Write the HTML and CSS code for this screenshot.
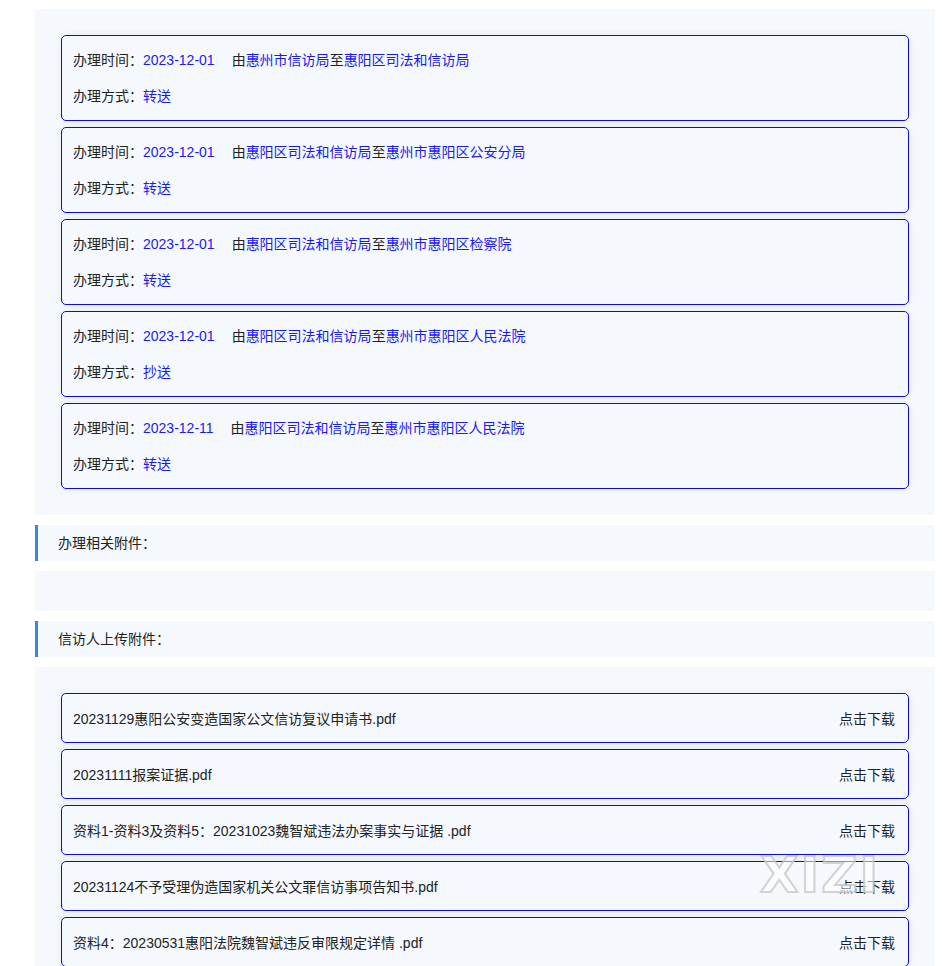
FILE: index.html
```html
<!DOCTYPE html>
<html lang="zh-CN">
<head>
    <meta charset="UTF-8">
    <title>办理流程</title>
    <link rel="stylesheet" href="styles.css">
</head>
<body>

<div class="page">
    <!-- 办理流程 -->
    <div class="panel">
        <div class="card">
            <div class="row">办理时间：<span class="blue">2023-12-01</span><span class="route">由<span class="blue">惠州市信访局</span>至<span class="blue">惠阳区司法和信访局</span></span></div>
            <div class="row">办理方式：<span class="blue">转送</span></div>
        </div>
        <div class="card">
            <div class="row">办理时间：<span class="blue">2023-12-01</span><span class="route">由<span class="blue">惠阳区司法和信访局</span>至<span class="blue">惠州市惠阳区公安分局</span></span></div>
            <div class="row">办理方式：<span class="blue">转送</span></div>
        </div>
        <div class="card">
            <div class="row">办理时间：<span class="blue">2023-12-01</span><span class="route">由<span class="blue">惠阳区司法和信访局</span>至<span class="blue">惠州市惠阳区检察院</span></span></div>
            <div class="row">办理方式：<span class="blue">转送</span></div>
        </div>
        <div class="card">
            <div class="row">办理时间：<span class="blue">2023-12-01</span><span class="route">由<span class="blue">惠阳区司法和信访局</span>至<span class="blue">惠州市惠阳区人民法院</span></span></div>
            <div class="row">办理方式：<span class="blue">抄送</span></div>
        </div>
        <div class="card">
            <div class="row">办理时间：<span class="blue">2023-12-11</span><span class="route">由<span class="blue">惠阳区司法和信访局</span>至<span class="blue">惠州市惠阳区人民法院</span></span></div>
            <div class="row">办理方式：<span class="blue">转送</span></div>
        </div>
    </div>

    <div class="section-title">办理相关附件：</div>
    <div class="panel empty"></div>

    <div class="section-title">信访人上传附件：</div>
    <div class="panel">
        <div class="file">
            <span>20231129惠阳公安变造国家公文信访复议申请书.pdf</span>
            <span class="download">点击下载</span>
        </div>
        <div class="file">
            <span>20231111报案证据.pdf</span>
            <span class="download">点击下载</span>
        </div>
        <div class="file">
            <span>资料1-资料3及资料5：20231023魏智斌违法办案事实与证据 .pdf</span>
            <span class="download">点击下载</span>
        </div>
        <div class="file">
            <span>20231124不予受理伪造国家机关公文罪信访事项告知书.pdf</span>
            <span class="download">点击下载</span>
        </div>
        <div class="file">
            <span>资料4：20230531惠阳法院魏智斌违反审限规定详情 .pdf</span>
            <span class="download">点击下载</span>
        </div>
    </div>
</div>

<div class="watermark">XIZI</div>

</body>
</html>
```

FILE: styles.css
```css
body {
    margin: 0;
    padding: 9px 7px 0 35px;
    background-color: #fff;
    font-family: "Liberation Sans", "Noto Sans CJK TC", sans-serif;
    font-size: 14px;
    color: #222;
    position: relative;
}
.page {
    width: 900px;
}
.panel {
    background-color: #f5f9fd;
    padding: 26px;
    display: flex;
    flex-direction: column;
    gap: 6px;
    margin-bottom: 10px;
}
.panel.empty {
    padding: 0;
    height: 40px;
}
.card {
    border: 1px solid #0a0af0;
    border-radius: 5px;
    padding: 6px 11px;
    box-shadow: 0 0 8px rgba(0, 0, 0, 0.06);
}
.row {
    line-height: 36px;
    white-space: nowrap;
}
.blue {
    color: #1a1af5;
}
.route {
    margin-left: 17px;
}
.section-title {
    background-color: #f5f9fd;
    border-left: 3px solid #3f86d6;
    height: 36px;
    line-height: 36px;
    padding-left: 20px;
    margin-bottom: 10px;
}
.file {
    border: 1px solid #0a0af0;
    border-radius: 5px;
    height: 48px;
    padding: 0 13px 0 11px;
    display: flex;
    align-items: center;
    justify-content: space-between;
    box-shadow: 0 0 8px rgba(0, 0, 0, 0.06);
}
.download {
    color: #222;
}
.watermark {
    position: absolute;
    left: 760px;
    top: 846px;
    font-family: "DejaVu Sans", sans-serif;
    font-weight: bold;
    font-size: 50px;
    letter-spacing: 2px;
    color: rgba(255, 255, 255, 0.5);
    -webkit-text-stroke: 2px rgba(200, 200, 200, 0.8);
    pointer-events: none;
}
```
